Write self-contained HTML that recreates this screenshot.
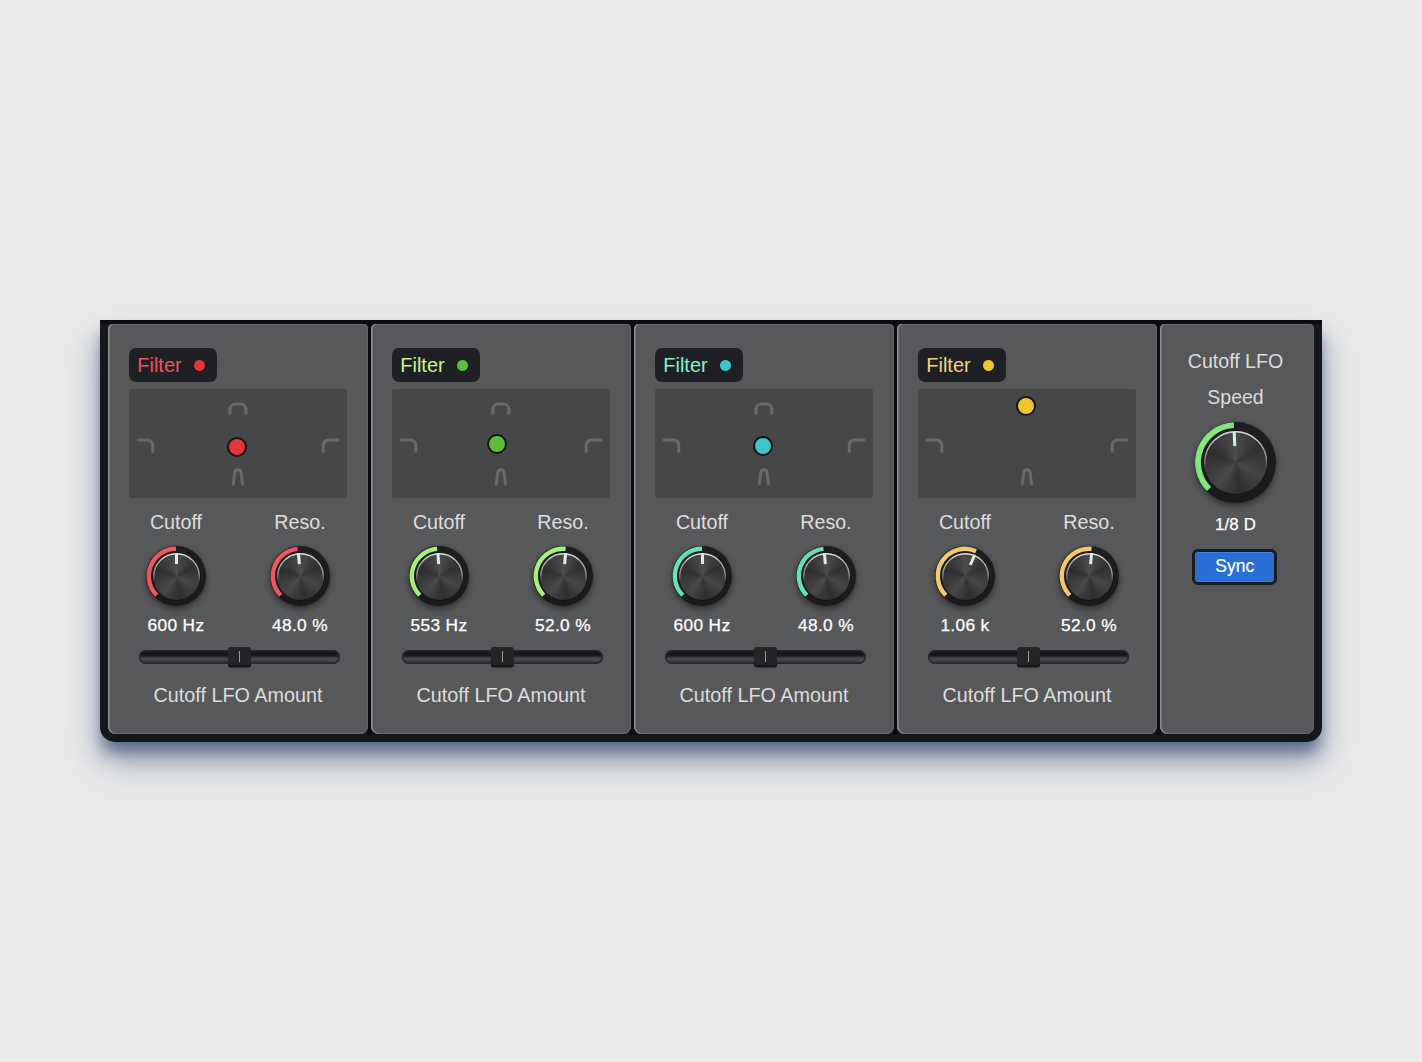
<!DOCTYPE html><html><head><meta charset="utf-8"><style>
html,body{margin:0;padding:0}
body{width:1422px;height:1062px;background:#eaeaea;position:relative;overflow:hidden;font-family:"Liberation Sans", sans-serif}
.abs{position:absolute}
.t{position:absolute;width:300px;text-align:center;white-space:nowrap}
.frame{position:absolute;left:100px;top:320px;width:1222px;height:422px;background:#16171a;border-radius:0 0 15px 15px;box-shadow:inset 0 4px 0 #0c0d0f, 0 12px 14px -3px rgba(38,60,100,0.55), 0 22px 36px rgba(45,68,115,0.25), -8px 18px 22px rgba(45,68,115,0.12), 8px 18px 22px rgba(45,68,115,0.12)}
.gap{position:absolute;top:324px;height:411px;background:#0c0d0f}
.panel{position:absolute;top:324px;height:410px;background:#57585a;border-radius:5px 5px 8px 8px;box-shadow:inset 1.5px 0 0 #8e9094, inset 0 1px 0 #6c6d70, inset -1px 0 0 #626366, inset 0 -1px 0 #68696c}
.fbtn{position:absolute;top:348px;width:88px;height:34px;background:#1f2023;border-radius:7px;}
.disp{position:absolute;top:389px;width:218px;height:109px;background:#464749;border-radius:3px}
.dot{position:absolute;border-radius:50%;box-sizing:border-box;border:2px solid #141414}
.ring{position:absolute;border-radius:50%;background:radial-gradient(circle at 50% 40%, #252527, #1c1c1e 60%, #151516);box-shadow:0 3px 6px rgba(0,0,0,0.45), 0 0 1px rgba(0,0,0,0.6)}
.cap{position:absolute;border-radius:50%;box-sizing:border-box;
 background:radial-gradient(circle at 50% 50%, rgba(255,255,255,0.03) 0%, rgba(0,0,0,0) 60%, rgba(0,0,0,0.16) 100%), conic-gradient(from 0deg, #4a4a4a 0deg, #303030 60deg, #444 118deg, #2f2f2f 170deg, #464646 218deg, #2e2e2e 290deg, #4a4a4a 360deg);
 box-shadow: 0 0 0 0.5px rgba(0,0,0,0.5)}
.ind{position:absolute;width:3px;background:#d8efe7}
.track{position:absolute;height:14.5px;border-radius:7.25px;background:linear-gradient(#222326 0%, #17181b 14%, #141518 34%, #2a2b2e 48%, #48494c 60%, #46474a 74%, #333437 88%, #2c2d30 100%);box-shadow:inset 0 0 0 1.5px #26272a, 0 0.5px 0 rgba(255,255,255,0.05)}
.thumb{position:absolute;width:23px;height:20px;border-radius:3px;background:#242527;box-shadow:inset 0 -1.5px 0 #111214, 0 1px 1px rgba(0,0,0,0.4)}
.thumb:after{content:"";position:absolute;left:10.8px;top:4px;width:1.4px;height:11px;background:#9c9c9c}
.sync{position:absolute;left:1192px;top:549px;width:85px;height:36px;box-sizing:border-box;border:3px solid #1b1c20;border-radius:6px;background:#2a6dd5;box-shadow:inset 0 1px 0 rgba(110,165,255,0.35), inset 0 -1px 0 rgba(90,150,255,0.35)}
</style></head><body>
<svg width="0" height="0" style="position:absolute"><defs><linearGradient id="rim" x1="0" y1="0" x2="0" y2="1"><stop offset="0" stop-color="#e6e6e6" stop-opacity="0.95"/><stop offset="0.45" stop-color="#cfcfcf" stop-opacity="0.6"/><stop offset="0.62" stop-color="#aaaaaa" stop-opacity="0"/><stop offset="1" stop-color="#aaaaaa" stop-opacity="0"/></linearGradient></defs></svg>
<div class="frame"></div>

<div class="gap" style="left:367px;width:5px"></div>
<div class="panel" style="left:108px;width:260px"></div>
<div class="fbtn" style="left:129px"></div>
<div class="dot" style="left:193.3px;top:359px;width:12.5px;height:12.5px;border-width:1.5px;background:#e5343b"></div>
<div class="disp" style="left:129px"></div>
<svg class="abs" style="left:129px;top:389px" width="218" height="109" fill="none" stroke="#69696c" stroke-width="3" stroke-linecap="round">
<path d="M100.9 24.6 V20.6 A5.6 5.6 0 0 1 106.5 15 H111.3 A5.6 5.6 0 0 1 116.9 20.6 V24.6"/>
<path d="M104.3 95 L105.7 83.9 A3.2 3.2 0 0 1 112.1 83.9 L113.5 95"/>
<path d="M9 51.1 H17.8 Q23.8 51.1 23.8 57.1 V62.5"/>
<path d="M209 51.1 H200.2 Q194.2 51.1 194.2 57.1 V62.5"/>
</svg>
<div class="dot" style="left:227px;top:437px;width:20px;height:20px;background:#e5343b"></div>
<div class="ring" style="left:146.00px;top:546.00px;width:60px;height:60px;"></div>
<svg class="abs" style="left:142.00px;top:542.00px" width="68" height="68"><path d="M14.77 53.23 A27.2 27.2 0 0 1 34.00 6.80" stroke="#f0565f" stroke-width="4.4" fill="none"/></svg>
<div class="cap" style="left:152.50px;top:552.50px;width:47.0px;height:47.0px;"></div>
<svg class="abs" style="left:152.50px;top:552.50px" width="47.0" height="47.0"><circle cx="23.5" cy="23.5" r="22.80" fill="none" stroke="url(#rim)" stroke-width="1.4"/></svg>
<div class="ind" style="left:174.50px;top:553.30px;height:11px;transform-origin:1.5px 22.70px;transform:rotate(0deg)"></div>
<div class="ring" style="left:270.00px;top:546.00px;width:60px;height:60px;"></div>
<svg class="abs" style="left:266.00px;top:542.00px" width="68" height="68"><path d="M14.77 53.23 A27.2 27.2 0 0 1 31.44 6.92" stroke="#f0565f" stroke-width="4.4" fill="none"/></svg>
<div class="cap" style="left:276.50px;top:552.50px;width:47.0px;height:47.0px;"></div>
<svg class="abs" style="left:276.50px;top:552.50px" width="47.0" height="47.0"><circle cx="23.5" cy="23.5" r="22.80" fill="none" stroke="url(#rim)" stroke-width="1.4"/></svg>
<div class="ind" style="left:298.50px;top:553.30px;height:11px;transform-origin:1.5px 22.70px;transform:rotate(-5.4deg)"></div>
<div class="track" style="left:139px;top:649.5px;width:201px"></div>
<div class="thumb" style="left:228px;top:647px"></div>
<div class="gap" style="left:630px;width:5px"></div>
<div class="panel" style="left:371px;width:260px"></div>
<div class="fbtn" style="left:392px"></div>
<div class="dot" style="left:456.3px;top:359px;width:12.5px;height:12.5px;border-width:1.5px;background:#5dbd38"></div>
<div class="disp" style="left:392px"></div>
<svg class="abs" style="left:392px;top:389px" width="218" height="109" fill="none" stroke="#69696c" stroke-width="3" stroke-linecap="round">
<path d="M100.9 24.6 V20.6 A5.6 5.6 0 0 1 106.5 15 H111.3 A5.6 5.6 0 0 1 116.9 20.6 V24.6"/>
<path d="M104.3 95 L105.7 83.9 A3.2 3.2 0 0 1 112.1 83.9 L113.5 95"/>
<path d="M9 51.1 H17.8 Q23.8 51.1 23.8 57.1 V62.5"/>
<path d="M209 51.1 H200.2 Q194.2 51.1 194.2 57.1 V62.5"/>
</svg>
<div class="dot" style="left:487px;top:434px;width:20px;height:20px;background:#5dbd38"></div>
<div class="ring" style="left:409.00px;top:546.00px;width:60px;height:60px;"></div>
<svg class="abs" style="left:405.00px;top:542.00px" width="68" height="68"><path d="M14.77 53.23 A27.2 27.2 0 0 1 32.10 6.87" stroke="#a6ef78" stroke-width="4.4" fill="none"/></svg>
<div class="cap" style="left:415.50px;top:552.50px;width:47.0px;height:47.0px;"></div>
<svg class="abs" style="left:415.50px;top:552.50px" width="47.0" height="47.0"><circle cx="23.5" cy="23.5" r="22.80" fill="none" stroke="url(#rim)" stroke-width="1.4"/></svg>
<div class="ind" style="left:437.50px;top:553.30px;height:11px;transform-origin:1.5px 22.70px;transform:rotate(-4deg)"></div>
<div class="ring" style="left:533.00px;top:546.00px;width:60px;height:60px;"></div>
<svg class="abs" style="left:529.00px;top:542.00px" width="68" height="68"><path d="M14.77 53.23 A27.2 27.2 0 0 1 36.56 6.92" stroke="#a6ef78" stroke-width="4.4" fill="none"/></svg>
<div class="cap" style="left:539.50px;top:552.50px;width:47.0px;height:47.0px;"></div>
<svg class="abs" style="left:539.50px;top:552.50px" width="47.0" height="47.0"><circle cx="23.5" cy="23.5" r="22.80" fill="none" stroke="url(#rim)" stroke-width="1.4"/></svg>
<div class="ind" style="left:561.50px;top:553.30px;height:11px;transform-origin:1.5px 22.70px;transform:rotate(5.4deg)"></div>
<div class="track" style="left:402px;top:649.5px;width:201px"></div>
<div class="thumb" style="left:491px;top:647px"></div>
<div class="gap" style="left:893px;width:5px"></div>
<div class="panel" style="left:634px;width:260px"></div>
<div class="fbtn" style="left:655px"></div>
<div class="dot" style="left:719.3px;top:359px;width:12.5px;height:12.5px;border-width:1.5px;background:#3ec5cb"></div>
<div class="disp" style="left:655px"></div>
<svg class="abs" style="left:655px;top:389px" width="218" height="109" fill="none" stroke="#69696c" stroke-width="3" stroke-linecap="round">
<path d="M100.9 24.6 V20.6 A5.6 5.6 0 0 1 106.5 15 H111.3 A5.6 5.6 0 0 1 116.9 20.6 V24.6"/>
<path d="M104.3 95 L105.7 83.9 A3.2 3.2 0 0 1 112.1 83.9 L113.5 95"/>
<path d="M9 51.1 H17.8 Q23.8 51.1 23.8 57.1 V62.5"/>
<path d="M209 51.1 H200.2 Q194.2 51.1 194.2 57.1 V62.5"/>
</svg>
<div class="dot" style="left:753px;top:435.5px;width:20px;height:20px;background:#3ec5cb"></div>
<div class="ring" style="left:672.00px;top:546.00px;width:60px;height:60px;"></div>
<svg class="abs" style="left:668.00px;top:542.00px" width="68" height="68"><path d="M14.77 53.23 A27.2 27.2 0 0 1 34.00 6.80" stroke="#62e2b2" stroke-width="4.4" fill="none"/></svg>
<div class="cap" style="left:678.50px;top:552.50px;width:47.0px;height:47.0px;"></div>
<svg class="abs" style="left:678.50px;top:552.50px" width="47.0" height="47.0"><circle cx="23.5" cy="23.5" r="22.80" fill="none" stroke="url(#rim)" stroke-width="1.4"/></svg>
<div class="ind" style="left:700.50px;top:553.30px;height:11px;transform-origin:1.5px 22.70px;transform:rotate(0deg)"></div>
<div class="ring" style="left:796.00px;top:546.00px;width:60px;height:60px;"></div>
<svg class="abs" style="left:792.00px;top:542.00px" width="68" height="68"><path d="M14.77 53.23 A27.2 27.2 0 0 1 31.44 6.92" stroke="#62e2b2" stroke-width="4.4" fill="none"/></svg>
<div class="cap" style="left:802.50px;top:552.50px;width:47.0px;height:47.0px;"></div>
<svg class="abs" style="left:802.50px;top:552.50px" width="47.0" height="47.0"><circle cx="23.5" cy="23.5" r="22.80" fill="none" stroke="url(#rim)" stroke-width="1.4"/></svg>
<div class="ind" style="left:824.50px;top:553.30px;height:11px;transform-origin:1.5px 22.70px;transform:rotate(-5.4deg)"></div>
<div class="track" style="left:665px;top:649.5px;width:201px"></div>
<div class="thumb" style="left:754px;top:647px"></div>
<div class="gap" style="left:1156px;width:5px"></div>
<div class="panel" style="left:897px;width:260px"></div>
<div class="fbtn" style="left:918px"></div>
<div class="dot" style="left:982.3px;top:359px;width:12.5px;height:12.5px;border-width:1.5px;background:#f0c62e"></div>
<div class="disp" style="left:918px"></div>
<svg class="abs" style="left:918px;top:389px" width="218" height="109" fill="none" stroke="#69696c" stroke-width="3" stroke-linecap="round">

<path d="M104.3 95 L105.7 83.9 A3.2 3.2 0 0 1 112.1 83.9 L113.5 95"/>
<path d="M9 51.1 H17.8 Q23.8 51.1 23.8 57.1 V62.5"/>
<path d="M209 51.1 H200.2 Q194.2 51.1 194.2 57.1 V62.5"/>
</svg>
<div class="dot" style="left:1016px;top:396px;width:20px;height:20px;background:#f0c62e"></div>
<div class="ring" style="left:935.00px;top:546.00px;width:60px;height:60px;"></div>
<svg class="abs" style="left:931.00px;top:542.00px" width="68" height="68"><path d="M14.77 53.23 A27.2 27.2 0 0 1 45.06 9.15" stroke="#f2c96c" stroke-width="4.4" fill="none"/></svg>
<div class="cap" style="left:941.50px;top:552.50px;width:47.0px;height:47.0px;"></div>
<svg class="abs" style="left:941.50px;top:552.50px" width="47.0" height="47.0"><circle cx="23.5" cy="23.5" r="22.80" fill="none" stroke="url(#rim)" stroke-width="1.4"/></svg>
<div class="ind" style="left:963.50px;top:553.30px;height:11px;transform-origin:1.5px 22.70px;transform:rotate(24deg)"></div>
<div class="ring" style="left:1059.00px;top:546.00px;width:60px;height:60px;"></div>
<svg class="abs" style="left:1055.00px;top:542.00px" width="68" height="68"><path d="M14.77 53.23 A27.2 27.2 0 0 1 36.56 6.92" stroke="#f2c96c" stroke-width="4.4" fill="none"/></svg>
<div class="cap" style="left:1065.50px;top:552.50px;width:47.0px;height:47.0px;"></div>
<svg class="abs" style="left:1065.50px;top:552.50px" width="47.0" height="47.0"><circle cx="23.5" cy="23.5" r="22.80" fill="none" stroke="url(#rim)" stroke-width="1.4"/></svg>
<div class="ind" style="left:1087.50px;top:553.30px;height:11px;transform-origin:1.5px 22.70px;transform:rotate(5.4deg)"></div>
<div class="track" style="left:928px;top:649.5px;width:201px"></div>
<div class="thumb" style="left:1017px;top:647px"></div>
<div class="panel" style="left:1160px;width:154px"></div>
<div class="ring" style="left:1195.10px;top:422.20px;width:81.0px;height:81.0px;"></div>
<svg class="abs" style="left:1191.10px;top:418.20px" width="89.0" height="89.0"><path d="M17.98 71.02 A37.5 37.5 0 0 1 42.86 7.04" stroke="#80e87c" stroke-width="5.8" fill="none"/></svg>
<div class="cap" style="left:1203.90px;top:431.00px;width:63.4px;height:63.4px;"></div>
<svg class="abs" style="left:1203.90px;top:431.00px" width="63.4" height="63.4"><circle cx="31.7" cy="31.7" r="31.00" fill="none" stroke="url(#rim)" stroke-width="1.4"/></svg>
<div class="ind" style="left:1234.10px;top:431.80px;height:13.5px;transform-origin:1.5px 30.90px;transform:rotate(-2.5deg)"></div>
<div class="sync"></div>
<svg class="abs" style="left:0;top:0" width="1422" height="1062" text-anchor="middle" font-family="Liberation Sans, sans-serif"><text x="159.50" y="372.00" font-size="20" fill="#f2545e" font-weight="400" letter-spacing="0">Filter</text><text x="176.00" y="529.00" font-size="19.7" fill="#dedede" font-weight="400" letter-spacing="0">Cutoff</text><text x="300.00" y="529.00" font-size="19.7" fill="#dedede" font-weight="400" letter-spacing="0">Reso.</text><text x="176.00" y="631.00" font-size="17.3" fill="#ffffff" font-weight="400" letter-spacing="0.35" stroke="#ffffff" stroke-width="0.25">600 Hz</text><text x="300.00" y="631.00" font-size="17.3" fill="#ffffff" font-weight="400" letter-spacing="0.35" stroke="#ffffff" stroke-width="0.25">48.0 %</text><text x="238.00" y="702.00" font-size="19.8" fill="#dedede" font-weight="400" letter-spacing="0">Cutoff LFO Amount</text><text x="422.50" y="372.00" font-size="20" fill="#c4f590" font-weight="400" letter-spacing="0">Filter</text><text x="439.00" y="529.00" font-size="19.7" fill="#dedede" font-weight="400" letter-spacing="0">Cutoff</text><text x="563.00" y="529.00" font-size="19.7" fill="#dedede" font-weight="400" letter-spacing="0">Reso.</text><text x="439.00" y="631.00" font-size="17.3" fill="#ffffff" font-weight="400" letter-spacing="0.35" stroke="#ffffff" stroke-width="0.25">553 Hz</text><text x="563.00" y="631.00" font-size="17.3" fill="#ffffff" font-weight="400" letter-spacing="0.35" stroke="#ffffff" stroke-width="0.25">52.0 %</text><text x="501.00" y="702.00" font-size="19.8" fill="#dedede" font-weight="400" letter-spacing="0">Cutoff LFO Amount</text><text x="685.50" y="372.00" font-size="20" fill="#82f3c8" font-weight="400" letter-spacing="0">Filter</text><text x="702.00" y="529.00" font-size="19.7" fill="#dedede" font-weight="400" letter-spacing="0">Cutoff</text><text x="826.00" y="529.00" font-size="19.7" fill="#dedede" font-weight="400" letter-spacing="0">Reso.</text><text x="702.00" y="631.00" font-size="17.3" fill="#ffffff" font-weight="400" letter-spacing="0.35" stroke="#ffffff" stroke-width="0.25">600 Hz</text><text x="826.00" y="631.00" font-size="17.3" fill="#ffffff" font-weight="400" letter-spacing="0.35" stroke="#ffffff" stroke-width="0.25">48.0 %</text><text x="764.00" y="702.00" font-size="19.8" fill="#dedede" font-weight="400" letter-spacing="0">Cutoff LFO Amount</text><text x="948.50" y="372.00" font-size="20" fill="#f6d47e" font-weight="400" letter-spacing="0">Filter</text><text x="965.00" y="529.00" font-size="19.7" fill="#dedede" font-weight="400" letter-spacing="0">Cutoff</text><text x="1089.00" y="529.00" font-size="19.7" fill="#dedede" font-weight="400" letter-spacing="0">Reso.</text><text x="965.00" y="631.00" font-size="17.3" fill="#ffffff" font-weight="400" letter-spacing="0.35" stroke="#ffffff" stroke-width="0.25">1.06 k</text><text x="1089.00" y="631.00" font-size="17.3" fill="#ffffff" font-weight="400" letter-spacing="0.35" stroke="#ffffff" stroke-width="0.25">52.0 %</text><text x="1027.00" y="702.00" font-size="19.8" fill="#dedede" font-weight="400" letter-spacing="0">Cutoff LFO Amount</text><text x="1235.50" y="368.00" font-size="19.6" fill="#dcdcdc" font-weight="400" letter-spacing="0">Cutoff LFO</text><text x="1235.50" y="404.00" font-size="19.5" fill="#dcdcdc" font-weight="400" letter-spacing="0">Speed</text><text x="1235.50" y="530.00" font-size="16.8" fill="#ffffff" font-weight="400" letter-spacing="0.2" stroke="#ffffff" stroke-width="0.25">1/8 D</text><text x="1234.80" y="572.30" font-size="17.5" fill="#ffffff" font-weight="400" letter-spacing="0" stroke="#ffffff" stroke-width="0.2">Sync</text></svg>
</body></html>
